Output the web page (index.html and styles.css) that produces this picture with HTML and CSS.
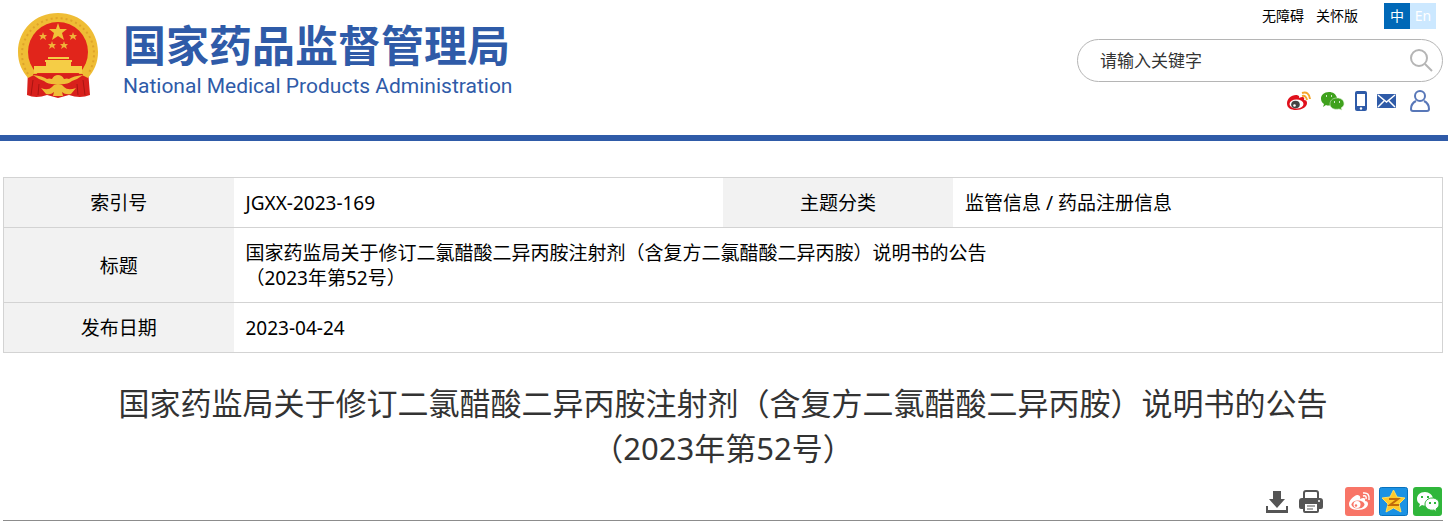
FILE: index.html
```
<!DOCTYPE html>
<html lang="zh-CN">

<head>
    <meta charset="utf-8">
    <title>国家药品监督管理局</title>
    <link rel="stylesheet" href="styles.css">
</head>

<body>
    <header class="header">
        <a class="logo" href="#">
            <svg class="emblem" viewBox="0 0 84 88" aria-hidden="true">
                <path d="M12 58L11 83Q20 87 31 83L42 86 53 83Q64 87 74 83L72 58z" fill="#d8201c"/>
                <path d="M17 68l-2 15M23 72l-1 11M67 68l2 15M61 72l1 11" stroke="#a91512" stroke-width="1" fill="none"/>
                <path d="M42 1C19 1 2 18 2 40c0 11 4 19 10 26l6-3 48 0 6 3c6-7 10-15 10-26C82 18 65 1 42 1z" fill="#efbd35"/>
                <path d="M12 62A36 36 0 1 1 72 62" fill="none" stroke="#dfa32a" stroke-width="2" stroke-dasharray="2 3"/>
                <circle cx="42" cy="40" r="30" fill="#e1251b"/>
                <path d="M18 54h48v7H18zM30 50h25v4H30zM29 48h27v2H29zM32 45h21v2H32z" fill="#f5cd46"/>
                <path d="M17 62h50l-3 7-11 5H31l-11-5z" fill="#d8201c"/>
                <path d="M42 11l2 6 7 0-5 4 2 7-6-4-6 4 2-7-5-4 7 0z" fill="#f0c238"/>
                <path id="star" d="M27 20l1 3 3 0-2 2 1 3-3-2-3 2 1-3-2-2 3 0z" fill="#f0b238"/>
                <use href="#star" x="30"/>
                <use href="#star" x="9" y="9"/>
                <use href="#star" x="21" y="9"/>
                <path d="M17 63q10 1 14 4 2-1 5 0 2-4 6-4t6 4q3-1 5 0 4-3 14-4-5 4-11 6-5 4-14 3-9 1-14-3-6-2-11-6z" fill="#f0bd38"/>
                <path d="M25 76q7 3 11-1 2-3 6-3t6 3q4 4 12 1l-5 6q-6 1-9-2l1 4H37l1-4q-3 3-8 2z" fill="#f0bd38"/>
            </svg>
            <span class="logo-text">
                <span class="logo-cn">国家药品监督管理局</span>
                <span class="logo-en">National Medical Products Administration</span>
            </span>
        </a>

        <div class="tools">
            <nav class="top-links">
                <a href="#">无障碍</a>
                <a href="#">关怀版</a>
                <span class="lang">
                    <a class="lang-cn" href="#">中</a><a class="lang-en" href="#">En</a>
                </span>
            </nav>

            <form class="search">
                <input class="search-input" type="text" placeholder="请输入关键字" aria-label="请输入关键字">
                <button class="search-btn" type="button" aria-label="搜索">
                    <svg width="24" height="24" viewBox="0 0 24 24" fill="none" stroke="#b5b5b5" stroke-width="2">
                        <circle cx="10" cy="9" r="8"/>
                        <path d="M16 15l7 7"/>
                    </svg>
                </button>
            </form>

            <div class="social">
                <a class="weibo" href="#" aria-label="微博">
                    <svg width="24" height="20" viewBox="0 0 24 20">
                        <path d="M9 4C4 4 0 8 0 12.500 0 17 4 19 9 19c6 0 11-3 11-7 0-2-1-3-3-3 1-3-1-4-5-2 1-2-1-3-3-3z" fill="#e0101c"/>
                        <ellipse cx="9.500" cy="13" rx="7" ry="4.500" fill="#fff"/>
                        <ellipse cx="8.500" cy="13.500" rx="4.300" ry="3.800" fill="#444"/>
                        <circle cx="7.500" cy="14.500" r="1.300" fill="#fff"/>
                        <path d="M15 2q7-2 8 6M15 5q4-1 5 4" fill="none" stroke="#f4a62a" stroke-width="2"/>
                    </svg>
                </a>
                <a class="wechat" href="#" aria-label="微信">
                    <svg width="24" height="20" viewBox="0 0 24 20">
                        <path d="M8 1C3 1 0 4 0 7.500 0 10 1 12 3 13l-1 3 3-2q2 1 5 0 7-2 6-7C15 3 12 1 8 1z" fill="#3fa11d"/>
                        <path d="M16 7c-5 0-7 3-7 6 0 4 4 6 9 5l3 1-1-2c2-1 3-3 3-4 0-4-3-6-7-6z" fill="#3fa11d" stroke="#d5edcb" stroke-width=".6"/>
                        <path d="M5 5h1M10 5h1M13 11h1M18 11h1" stroke="#fff" stroke-width="1.500"/>
                    </svg>
                </a>
                <a class="phone" href="#" aria-label="手机">
                    <svg width="12" height="20" viewBox="0 0 12 20">
                        <rect width="12" height="20" rx="2" fill="#2f5ba8"/>
                        <path d="M2 3h8v12H2z" fill="#fff"/>
                        <circle cx="6" cy="17.500" r="1.200" fill="#fff"/>
                    </svg>
                </a>
                <a class="mail" href="#" aria-label="邮箱">
                    <svg width="19" height="14" viewBox="0 0 19 14">
                        <rect width="19" height="14" rx="1" fill="#2f5ba8"/>
                        <path d="M1 1l8.500 7L18 1M1 13l6-6M18 13l-6-6" fill="none" stroke="#fff" stroke-width="1.500"/>
                    </svg>
                </a>
                <a class="user" href="#" aria-label="用户">
                    <svg width="20" height="22" viewBox="0 0 20 22" fill="none" stroke="#5877b8" stroke-width="2">
                        <circle cx="10" cy="6" r="5"/>
                        <path d="M6 11c-4 2-5 5-5 8q0 2 2 2h14q2 0 2-2c0-3-1-6-5-8"/>
                    </svg>
                </a>
            </div>
        </div>
    </header>

    <main class="content">
        <table class="info">
            <colgroup>
                <col class="col-name">
                <col>
                <col class="col-name">
                <col>
            </colgroup>
            <tr>
                <th>索引号</th>
                <td>JGXX-2023-169</td>
                <th>主题分类</th>
                <td>监管信息 / 药品注册信息</td>
            </tr>
            <tr>
                <th>标题</th>
                <td colspan="3">国家药监局关于修订二氯醋酸二异丙胺注射剂（含复方二氯醋酸二异丙胺）说明书的公告<br>（2023年第52号）</td>
            </tr>
            <tr>
                <th>发布日期</th>
                <td colspan="3">2023-04-24</td>
            </tr>
        </table>

        <h1 class="title">国家药监局关于修订二氯醋酸二异丙胺注射剂（含复方二氯醋酸二异丙胺）说明书的公告<br>（2023年第52号）</h1>

        <div class="actions">
            <button class="act" type="button" aria-label="下载">
                <svg width="22" height="24" viewBox="0 0 22 24" fill="#555">
                    <path d="M7 1h8v8h4l-8 9-8-9h4z"/>
                    <path d="M0 16h2v4h18v-4h2v7H0z"/>
                </svg>
            </button>
            <button class="act" type="button" aria-label="打印">
                <svg width="24" height="24" viewBox="0 0 24 24">
                    <path d="M5 8V3q0-2 2-2h10q2 0 2 2v5" fill="none" stroke="#555" stroke-width="2"/>
                    <path d="M3 8h18q3 0 3 3v6q0 2-2 2h-2v2q0 2-2 2H6q-2 0-2-2v-2H2q-2 0-2-2v-6q0-3 3-3z" fill="#555"/>
                    <path d="M6 14h12v7H6z" fill="#fff"/>
                    <path d="M8 16h8M8 19h6" stroke="#555"/>
                    <circle cx="20" cy="11" r="1" fill="#fff"/>
                </svg>
            </button>
            <div class="share">
                <a href="#" aria-label="分享到微博">
                    <svg width="29" height="29" viewBox="0 0 29 29">
                        <rect width="29" height="29" rx="3" fill="#f87567"/>
                        <path d="M12 8c-4 1-8 6-8 9 0 4 4 6 9 6 6 0 10-3 10-6 0-2-1-3-3-3 1-3-1-4-5-2 1-3-1-4-3-4z" fill="#fff"/>
                        <ellipse cx="13" cy="17.500" rx="6.500" ry="4" fill="#f87567"/>
                        <circle cx="12" cy="17.500" r="3.500" fill="#fff"/>
                        <circle cx="11" cy="18.500" r="1.200" fill="#f87567"/>
                        <path d="M18 6q7-1 6 7M18 9q4-1 3 3" fill="none" stroke="#fff" stroke-width="1.500"/>
                    </svg>
                </a>
                <a href="#" aria-label="分享到QQ空间">
                    <svg width="29" height="29" viewBox="0 0 29 29">
                        <rect x=".5" y=".5" width="28" height="28" rx="2" fill="#1b92e4" stroke="#0872bd"/>
                        <path d="M14.500 3l3.500 7 8 1-6 6 2 8-7.500-4L7 25l2-8-6-6 8-1z" fill="#ffc928" stroke="#ffdf60" stroke-linejoin="round"/>
                        <path d="M10 12h9l-8 6h9" fill="none" stroke="#c36b09" stroke-width="2"/>
                    </svg>
                </a>
                <a href="#" aria-label="分享到微信">
                    <svg width="29" height="29" viewBox="0 0 29 29">
                        <rect width="29" height="29" rx="3" fill="#30b63b"/>
                        <path d="M12 5c-5 0-8 3-8 7 0 2 1 4 3 5l-1 3 3-2q3 1 5 0 6-2 6-6c0-4-4-7-8-7z" fill="#fff"/>
                        <path d="M19 11c-4 0-7 3-7 6 0 4 4 7 9 6l3 2-1-3c2-1 3-3 3-5 0-4-3-6-7-6z" fill="#fff" stroke="#30b63b"/>
                        <path d="M8 10h2M14 10h2M16 16h2M21 16h2" stroke="#30b63b" stroke-width="2"/>
                    </svg>
                </a>
            </div>
        </div>
    </main>
</body>

</html>
```
FILE: styles.css
```
* {
    box-sizing: border-box;
}

body {
    margin: 0;
    background-color: #fff;
    color: #000;
    font-family: "Noto Sans", "Noto Sans CJK SC", sans-serif;
}

a {
    color: inherit;
    text-decoration: none;
}

svg {
    display: block;
}

button {
    padding: 0;
    border: 0;
    background: none;
    cursor: pointer;
}

.header {
    display: flex;
    justify-content: space-between;
    height: 141px;
    border-bottom: 6px solid #2f5ba8;
}

.logo {
    display: flex;
    align-items: flex-start;
    gap: 23px;
    padding: 12px 0 0 16px;
    color: #2f5ba8;
}

.emblem {
    width: 84px;
    height: 88px;
}

.logo-text {
    display: flex;
    flex-direction: column;
    padding-top: 9px;
}

.logo-cn {
    font-size: 43px;
    font-weight: bold;
    line-height: 50px;
}

.logo-en {
    font-family: Roboto, "Noto Sans", sans-serif;
    font-size: 21px;
    line-height: 30px;
}

.tools {
    width: 366px;
    margin-right: 5px;
    padding-top: 3px;
}

.top-links {
    display: flex;
    justify-content: flex-end;
    gap: 12px;
    padding-right: 7px;
    font-size: 14px;
    line-height: 26px;
}

.lang {
    display: flex;
    margin-left: 14px;
    color: #fff;
    text-align: center;
}

.lang a {
    width: 26px;
}

.lang-cn {
    background-color: #0068b7;
}

.lang-en {
    background-color: #cce8ff;
}

.search {
    display: flex;
    align-items: center;
    height: 43px;
    margin-top: 10px;
    padding: 0 9px 0 22px;
    border: 1px solid #b5b5b5;
    border-radius: 22px;
}

.search-input {
    flex: 1;
    min-width: 0;
    padding: 0;
    border: 0;
    outline: 0;
    background: none;
    font-family: inherit;
    font-size: 17px;
}

.search-input::placeholder {
    color: #333;
}

.social {
    display: flex;
    justify-content: flex-end;
    align-items: center;
    gap: 10px;
    margin-top: 8px;
    padding-right: 13px;
}

.user {
    margin-left: 4px;
}

.content {
    margin: 36px 5px 0 3px;
}

.info {
    width: 100%;
    table-layout: fixed;
    border-collapse: collapse;
    border: 1px solid #d3d3d3;
    font-size: 19px;
    line-height: 25px;
}

.col-name {
    width: 230px;
}

.info tr {
    border-bottom: 1px solid #d3d3d3;
}

.info th,
.info td {
    padding: 13px 12px 11px;
}

.info th {
    background-color: #f2f2f2;
    font-weight: normal;
}

.title {
    margin: 28px 0 0;
    color: #333;
    font-size: 31px;
    font-weight: normal;
    line-height: 45px;
    text-align: center;
}

.actions {
    display: flex;
    justify-content: flex-end;
    align-items: center;
    gap: 11px;
    margin-top: 16px;
    padding: 0 1px 4px 0;
    border-bottom: 1px solid #8c8c8c;
}

.share {
    display: flex;
    gap: 5px;
    margin-left: 11px;
}
```
